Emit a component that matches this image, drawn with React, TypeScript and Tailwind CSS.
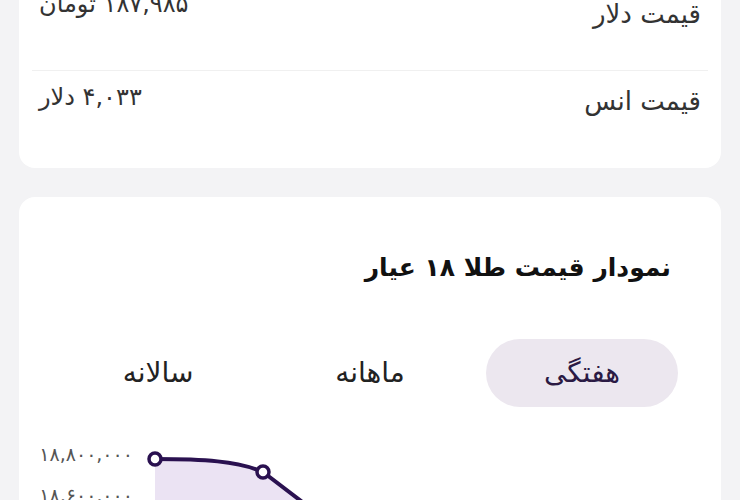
const font = { fontFamily: '"DejaVu Sans", "Noto Sans", sans-serif' };

type PriceRow = { label: string; value: string };

const rows: PriceRow[] = [
  { label: 'قیمت دلار', value: '۱۸۷,۹۸۵ تومان' },
  { label: 'قیمت انس', value: '۴,۰۳۳ دلار' },
];

const tabs = ['هفتگی', 'ماهانه', 'سالانه'];

export default function App() {
  return (
    <div dir="rtl" style={font} className="h-[500px] w-[740px] overflow-hidden bg-[#f3f3f5]">
      {/* قیمت‌ها */}
      <div className="mx-[19px] mt-[-40px] rounded-b-2xl bg-white px-[13px]">
        <div className="flex h-[111px] items-start justify-between border-b border-[#f0f0f0] px-[7px] pt-[36px]">
          <span className="text-[26px] leading-[36px] text-[#333]">{rows[0].label}</span>
          <span className="mt-[-10px] text-[24px] leading-[36px] text-[#333]">{rows[0].value}</span>
        </div>
        <div className="flex h-[97px] items-start justify-between px-[7px] pt-[12px]">
          <span className="text-[26px] leading-[36px] text-[#333]">{rows[1].label}</span>
          <span className="mt-[-4px] text-[24px] leading-[36px] text-[#333]">{rows[1].value}</span>
        </div>
      </div>

      {/* نمودار */}
      <div className="mx-[19px] mt-[29px] rounded-2xl bg-white px-[43px] pt-[53px]">
        <h2 className="pr-[7px] text-[25px] font-bold leading-[36px] text-[#111]">
          نمودار قیمت طلا ۱۸ عیار
        </h2>

        <div className="mt-[53px] grid grid-cols-3 gap-[20px]">
          {tabs.map((t, i) => (
            <div
              key={t}
              className={`flex h-[68px] items-center justify-center rounded-full text-[28px] ${
                i === 0 ? 'bg-[#ece7ef] text-[#2b1a44]' : 'text-[#222]'
              }`}
            >
              {t}
            </div>
          ))}
        </div>

        <div dir="ltr" className="mx-[-25px] mt-[33px] flex">
          <div className="flex w-[96px] flex-col gap-[13px] text-right text-[19px] leading-[28px] text-[#555]">
            <span>۱۸,۸۰۰,۰۰۰</span>
            <span>۱۸,۶۰۰,۰۰۰</span>
          </div>
          <svg width="569" height="90" viewBox="0 0 569 90" className="shrink-0">
            <path d="M22 19 C 70 19, 105 21, 130 32 L 206 90 L 22 90 Z" fill="#ebe3f3" />
            <path
              d="M22 19 C 70 19, 105 21, 130 32 L 206 90"
              fill="none"
              stroke="#2a1150"
              strokeWidth="4"
              strokeLinecap="round"
              strokeLinejoin="round"
            />
            <circle cx="22" cy="19" r="6" fill="#fff" stroke="#2a1150" strokeWidth="3.5" />
            <circle cx="130" cy="32" r="6" fill="#fff" stroke="#2a1150" strokeWidth="3.5" />
          </svg>
        </div>
      </div>
    </div>
  );
}
